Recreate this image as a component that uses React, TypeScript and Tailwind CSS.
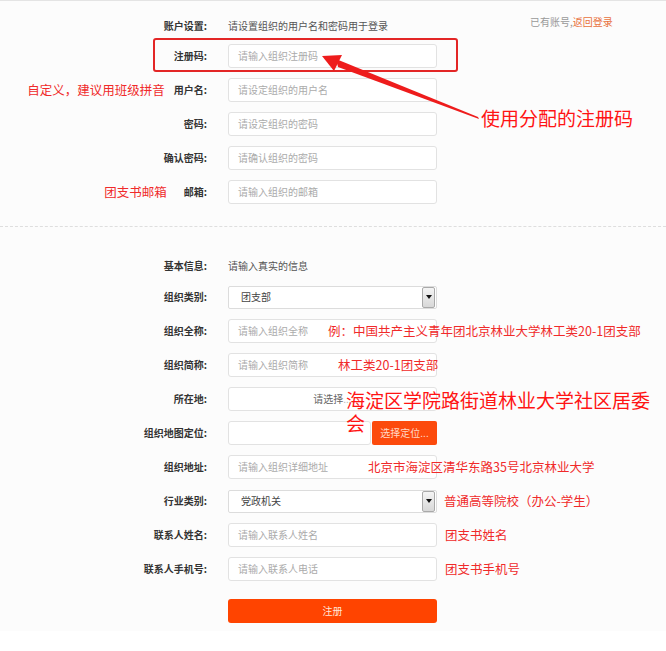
import React from "react";

const FONT = { fontFamily: '"Noto Sans CJK SC", "Noto Sans", sans-serif' };

function Row({
  label,
  left,
  children,
  className = "",
}: {
  label: string;
  left?: React.ReactNode;
  children?: React.ReactNode;
  className?: string;
}) {
  return (
    <div className={`relative flex items-center h-[24px] ${className}`}>
      <div className="w-[207px] shrink-0 flex items-center justify-end gap-[9px]">
        {left}
        <span className="text-[10px] font-bold text-[#333] leading-none">{label}</span>
      </div>
      <div className="ml-[21px] flex items-center h-[24px]">{children}</div>
    </div>
  );
}

function Field({ placeholder, className = "w-[209px]" }: { placeholder?: string; className?: string }) {
  return (
    <div
      className={`${className} h-[24px] bg-white border border-[#e2e2e2] rounded-[3px] flex items-center px-[9px] text-[10px] text-[#ababab] leading-none`}
    >
      {placeholder}
    </div>
  );
}

function SelectBox({ value }: { value: string }) {
  return (
    <div className="w-[209px] h-[23px] bg-white border border-[#dcdcdc] rounded-[2px] flex items-center text-[10px] text-[#444] leading-none">
      <span className="flex-1 pl-[12px]">{value}</span>
      <div className="w-[13px] h-[21px] mr-[1px] border border-[#a9a9a9] rounded-[2px] bg-gradient-to-b from-[#f4f4f4] to-[#d8d8d8] flex items-center justify-center">
        <div className="w-0 h-0 border-l-[3px] border-r-[3px] border-t-[4px] border-l-transparent border-r-transparent border-t-[#111]" />
      </div>
    </div>
  );
}

const note = "text-[12.5px] text-[#f02a2a] leading-none whitespace-nowrap";

export default function App() {
  return (
    <div className="min-h-[651px] bg-white" style={FONT}>
      <div className="relative bg-[#fcfcfc] border-t border-[#e4e4e4] pt-[13px] pb-[8px]">
        {/* 账户设置 */}
        <Row label="账户设置:">
          <span className="text-[10px] text-[#555] leading-none whitespace-nowrap">请设置组织的用户名和密码用于登录</span>
          <span className="ml-[142px] -mt-[9px] text-[10px] leading-none whitespace-nowrap text-[#999]">
            已有账号,<span className="text-[#e9713c]">返回登录</span>
          </span>
        </Row>

        <Row label="注册码:" className="mt-[6px]">
          <Field placeholder="请输入组织注册码" />
          <div className="absolute left-[153px] -top-[6px] w-[305px] h-[34px] border-2 border-[#e32626] rounded-[3px] pointer-events-none" />
        </Row>
        <Row
          label="用户名:"
          className="mt-[10px]"
          left={<span className={note}>自定义，建议用班级拼音</span>}
        >
          <Field placeholder="请设定组织的用户名" />
        </Row>
        <Row label="密码:" className="mt-[10px]">
          <Field placeholder="请设定组织的密码" />
        </Row>
        <Row label="确认密码:" className="mt-[10px]">
          <Field placeholder="请确认组织的密码" />
        </Row>
        <Row label="邮箱:" className="mt-[10px]" left={<span className={`${note} mr-[8px]`}>团支书邮箱</span>}>
          <Field placeholder="请输入组织的邮箱" />
        </Row>

        <div className="mt-[22px] border-t border-dashed border-[#dedede]" />

        {/* 基本信息 */}
        <Row label="基本信息:" className="mt-[27px]">
          <span className="text-[10px] text-[#555] leading-none whitespace-nowrap">请输入真实的信息</span>
        </Row>
        <Row label="组织类别:" className="mt-[7px]">
          <SelectBox value="团支部" />
        </Row>
        <Row label="组织全称:" className="mt-[10px]">
          <Field placeholder="请输入组织全称" />
          <span className={`${note} -ml-[109px]`}>例：中国共产主义青年团北京林业大学林工类20-1团支部</span>
        </Row>
        <Row label="组织简称:" className="mt-[10px]">
          <Field placeholder="请输入组织简称" />
          <span className={`${note} -ml-[99px]`}>林工类20-1团支部</span>
        </Row>
        <Row label="所在地:" className="mt-[10px]">
          <div className="w-[209px] h-[24px] bg-white border border-[#e2e2e2] rounded-[3px] flex items-center justify-center text-[10px] text-[#666] leading-none">
            请选择<span className="text-[#bbb]">...</span>
          </div>
          <span className="relative z-10 -ml-[91px] self-start w-[306px] h-[24px] pt-[1px] text-[19px] leading-[23px] text-[#ff1414]">
            海淀区学院路街道林业大学社区居委会
          </span>
        </Row>
        <Row label="组织地图定位:" className="mt-[10px]">
          <Field className="w-[143px]" />
          <button className="ml-[1px] w-[65px] h-[24px] bg-[#fc4a0c] rounded-[2px] text-[10px] text-[#ffd9c8] leading-none">
            选择定位...
          </button>
        </Row>
        <Row label="组织地址:" className="mt-[10px]">
          <Field placeholder="请输入组织详细地址" />
          <span className={`${note} -ml-[69px]`}>北京市海淀区清华东路35号北京林业大学</span>
        </Row>
        <Row label="行业类别:" className="mt-[10px]">
          <SelectBox value="党政机关" />
          <span className={`${note} ml-[7px]`}>普通高等院校（办公-学生）</span>
        </Row>
        <Row label="联系人姓名:" className="mt-[10px]">
          <Field placeholder="请输入联系人姓名" />
          <span className={`${note} ml-[8px]`}>团支书姓名</span>
        </Row>
        <Row label="联系人手机号:" className="mt-[10px]">
          <Field placeholder="请输入联系人电话" />
          <span className={`${note} ml-[8px]`}>团支书手机号</span>
        </Row>

        <div className="mt-[18px] flex">
          <button className="ml-[228px] w-[209px] h-[24px] bg-[#ff4400] rounded-[3px] text-[10px] text-[#ffe5d9] leading-none">
            注册
          </button>
        </div>

        {/* 提示箭头 */}
        <svg className="absolute left-0 top-0 pointer-events-none" width="666" height="651">
          <polygon points="322,55 342,54 334,70" fill="#ee1c1c" />
          <polygon points="336,58 338,66 479,118 478,116" fill="#ee1c1c" />
        </svg>
        <span className="absolute left-[481px] top-[107px] text-[19px] leading-none text-[#ff1414] whitespace-nowrap">
          使用分配的注册码
        </span>
      </div>
    </div>
  );
}
